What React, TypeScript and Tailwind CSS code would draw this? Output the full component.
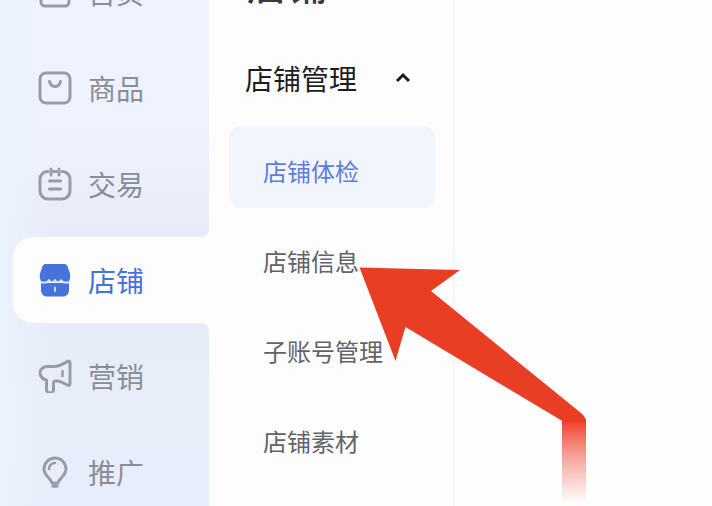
import { useState } from "react";
import type { ReactNode } from "react";
import clsx from "clsx";

type Item = { label: string; icon: ReactNode };

const outline = {
  fill: "none",
  stroke: "currentColor",
  strokeWidth: 3,
  strokeLinecap: "round" as const,
  strokeLinejoin: "round" as const,
};

function HomeIcon() {
  return (
    <svg viewBox="0 0 34 34" className="size-[34px] text-[#999ca7]" {...outline}>
      <path d="M3 12 17 2l14 10v15a4 4 0 0 1-4 4H7a4 4 0 0 1-4-4z" />
    </svg>
  );
}

function GoodsIcon() {
  return (
    <svg viewBox="0 0 34 34" className="size-[34px] text-[#999ca7]" {...outline}>
      <rect x="2" y="2" width="30" height="30" rx="6" />
      <path d="M11.500 10.500c1 3.500 3 5 5.500 5s4.500-1.500 5.500-5" />
    </svg>
  );
}

function TradeIcon() {
  return (
    <svg viewBox="0 0 34 34" className="size-[34px] text-[#999ca7]" {...outline}>
      <path d="M10 4.500H9.500A7.500 7.500 0 0 0 2 12V24a8 8 0 0 0 8 8h14a8 8 0 0 0 8-8V12a7.500 7.500 0 0 0-7.500-7.500H24M15.500 4.500h3" />
      <path d="M13 2v6M21 2v6M11.500 14h11M11.500 22h11" />
    </svg>
  );
}

function ShopIcon() {
  return (
    <svg viewBox="0 0 34 34" className="size-[34px]" fill="currentColor">
      <path d="M8 1h18c1.500 0 2.600.6 3.400 2L32 10.500c.6 3.500 0 6.500-1.500 8.500h-27C2 17 1.400 14 2 10.500L4.600 3C5.400 1.600 6.500 1 8 1z" />
      <path d="M3 20h28v7c0 4-2.500 6.500-6 6.500H9c-3.500 0-6-2.500-6-6.500z" />
      <path
        d="M2 19.500h5.500q2 0 3.500-2.500 3 4.500 6 0 3 4.500 6 0 1.500 2.500 3.500 2.500H32M17 24.500v3.500"
        fill="none"
        stroke="#dfe8ff"
        strokeWidth="1.800"
        strokeLinecap="round"
        strokeLinejoin="round"
      />
    </svg>
  );
}

function MarketingIcon() {
  return (
    <svg viewBox="0 0 34 34" className="size-[34px] text-[#999ca7]" {...outline}>
      <path d="M29.500 2.500Q32 1.500 32 4v20.500q0 2.500-2.500 1.500L22 22.500q-1.500-.5-3-.5h-1.500q-2 0-2 2v6.500a3.500 3.500 0 0 1-7 0V21C5 20.500 2 17.500 2 14s3-6.500 7-6.500h7c5 0 9-2.500 13.500-5z" />
      <path d="M24.500 12v5" strokeWidth="2.500" />
    </svg>
  );
}

function PromoteIcon() {
  return (
    <svg viewBox="0 0 34 34" className="size-[34px] text-[#999ca7]" {...outline}>
      <path d="M14 28C13 23.500 6 20.500 6 14a11 11 0 0 1 22 0c0 6.500-7 9.500-8 14z" />
      <path d="M15 31h4" strokeWidth="3.500" />
      <path d="M11 14a6 6 0 0 1 6-6" strokeWidth="2.500" />
    </svg>
  );
}

const mainItems: Item[] = [
  { label: "首页", icon: <HomeIcon /> },
  { label: "商品", icon: <GoodsIcon /> },
  { label: "交易", icon: <TradeIcon /> },
  { label: "店铺", icon: <ShopIcon /> },
  { label: "营销", icon: <MarketingIcon /> },
  { label: "推广", icon: <PromoteIcon /> },
];

const shopItems = ["店铺体检", "店铺信息", "子账号管理", "店铺素材"];

function Sidebar() {
  return (
    <nav className="w-[209px] shrink-0 overflow-hidden bg-[linear-gradient(90deg,#eaf3fd_0%,transparent_24%),linear-gradient(180deg,#eff3fe_0%,#eef2fd_30%,#e7ebf8_46%,#e6ebf8_66%,#e8eefa_80%,#e7edfa_100%)]">
      <ul className="-mt-[51px] flex flex-col gap-[10px] pl-[13px]">
        {mainItems.map(({ label, icon }) => {
          const active = label === "店铺";
          return (
            <li key={label}>
              <a
                href="#"
                aria-current={active ? "page" : undefined}
                className={clsx(
                  "relative flex h-[86px] items-center gap-4 rounded-l-[20px] pl-[25px] text-[28px] leading-10",
                  active
                    ? "bg-[#fdfdfe] text-[#4672dc] before:absolute before:-top-2 before:right-0 before:size-2 before:rounded-br-lg before:shadow-[4px_4px_0_4px_#fdfdfe] after:absolute after:-bottom-2 after:right-0 after:size-2 after:rounded-tr-lg after:shadow-[4px_-4px_0_4px_#fdfdfe]"
                    : "text-[#8a8d98]"
                )}
              >
                {icon}
                <span>{label}</span>
              </a>
            </li>
          );
        })}
      </ul>
    </nav>
  );
}

function ShopMenu() {
  const [open, setOpen] = useState(true);
  const [current, setCurrent] = useState("店铺体检");

  return (
    <aside className="w-[246px] shrink-0 overflow-hidden border-r-2 border-[#f6f6f9] bg-[#fdfdfd] pr-[18px] pl-5">
      <h2 className="-mt-[42px] pl-[18px] text-[40px] leading-[50px] font-medium text-[#3a3a3d]">
        店铺
      </h2>
      <button
        type="button"
        aria-expanded={open}
        onClick={() => setOpen(!open)}
        className="mt-[50px] flex w-full cursor-pointer items-center justify-between pr-6 pl-4 text-[28px] leading-10 text-[#1d1d1f]"
      >
        <span>店铺管理</span>
        <svg
          viewBox="0 0 16 12"
          className={clsx("h-3 w-4", !open && "rotate-180")}
          fill="none"
          stroke="currentColor"
          strokeWidth="3"
        >
          <path d="m2 9 6-6 6 6" />
        </svg>
      </button>
      {open && (
        <ul className="mt-7 flex flex-col gap-2">
          {shopItems.map((label) => (
            <li key={label}>
              <a
                href="#"
                onClick={() => setCurrent(label)}
                className={clsx(
                  "flex h-[82px] items-center rounded-xl pt-2 pl-[34px] text-2xl",
                  label === current
                    ? "bg-[#f2f5fe] text-[#5b7fdb]"
                    : "text-[#626368]"
                )}
              >
                {label}
              </a>
            </li>
          ))}
        </ul>
      )}
    </aside>
  );
}

// red pointer lying over the menu, its tail fades out downwards
function Pointer() {
  return (
    <svg
      viewBox="0 0 230 240"
      className="pointer-events-none absolute top-[266px] left-[358px] h-[240px] w-[230px]"
      aria-hidden="true"
    >
      <defs>
        <linearGradient id="tail" x1="0" y1="0" x2="0" y2="1">
          <stop offset="0" stopColor="#f03a24" />
          <stop offset="0.15" stopColor="#f03a24" stopOpacity="0.8" />
          <stop offset="0.5" stopColor="#ee4a38" stopOpacity="0.45" />
          <stop offset="1" stopColor="#ee4a38" stopOpacity="0" />
        </linearGradient>
      </defs>
      <rect x="204" y="153" width="24" height="84" fill="url(#tail)" />
      <path
        d="M1.500 1.500 102 4 73 25 223 147Q228 151 228 156H206L47.500 61 37.500 95z"
        fill="#e83f24"
      />
    </svg>
  );
}

export default function App() {
  return (
    <div className="relative flex h-screen overflow-hidden bg-white font-['Noto_Sans_CJK_SC',sans-serif]">
      <Sidebar />
      <ShopMenu />
      <main className="flex-1 bg-[#fefefe]" />
      <Pointer />
    </div>
  );
}
